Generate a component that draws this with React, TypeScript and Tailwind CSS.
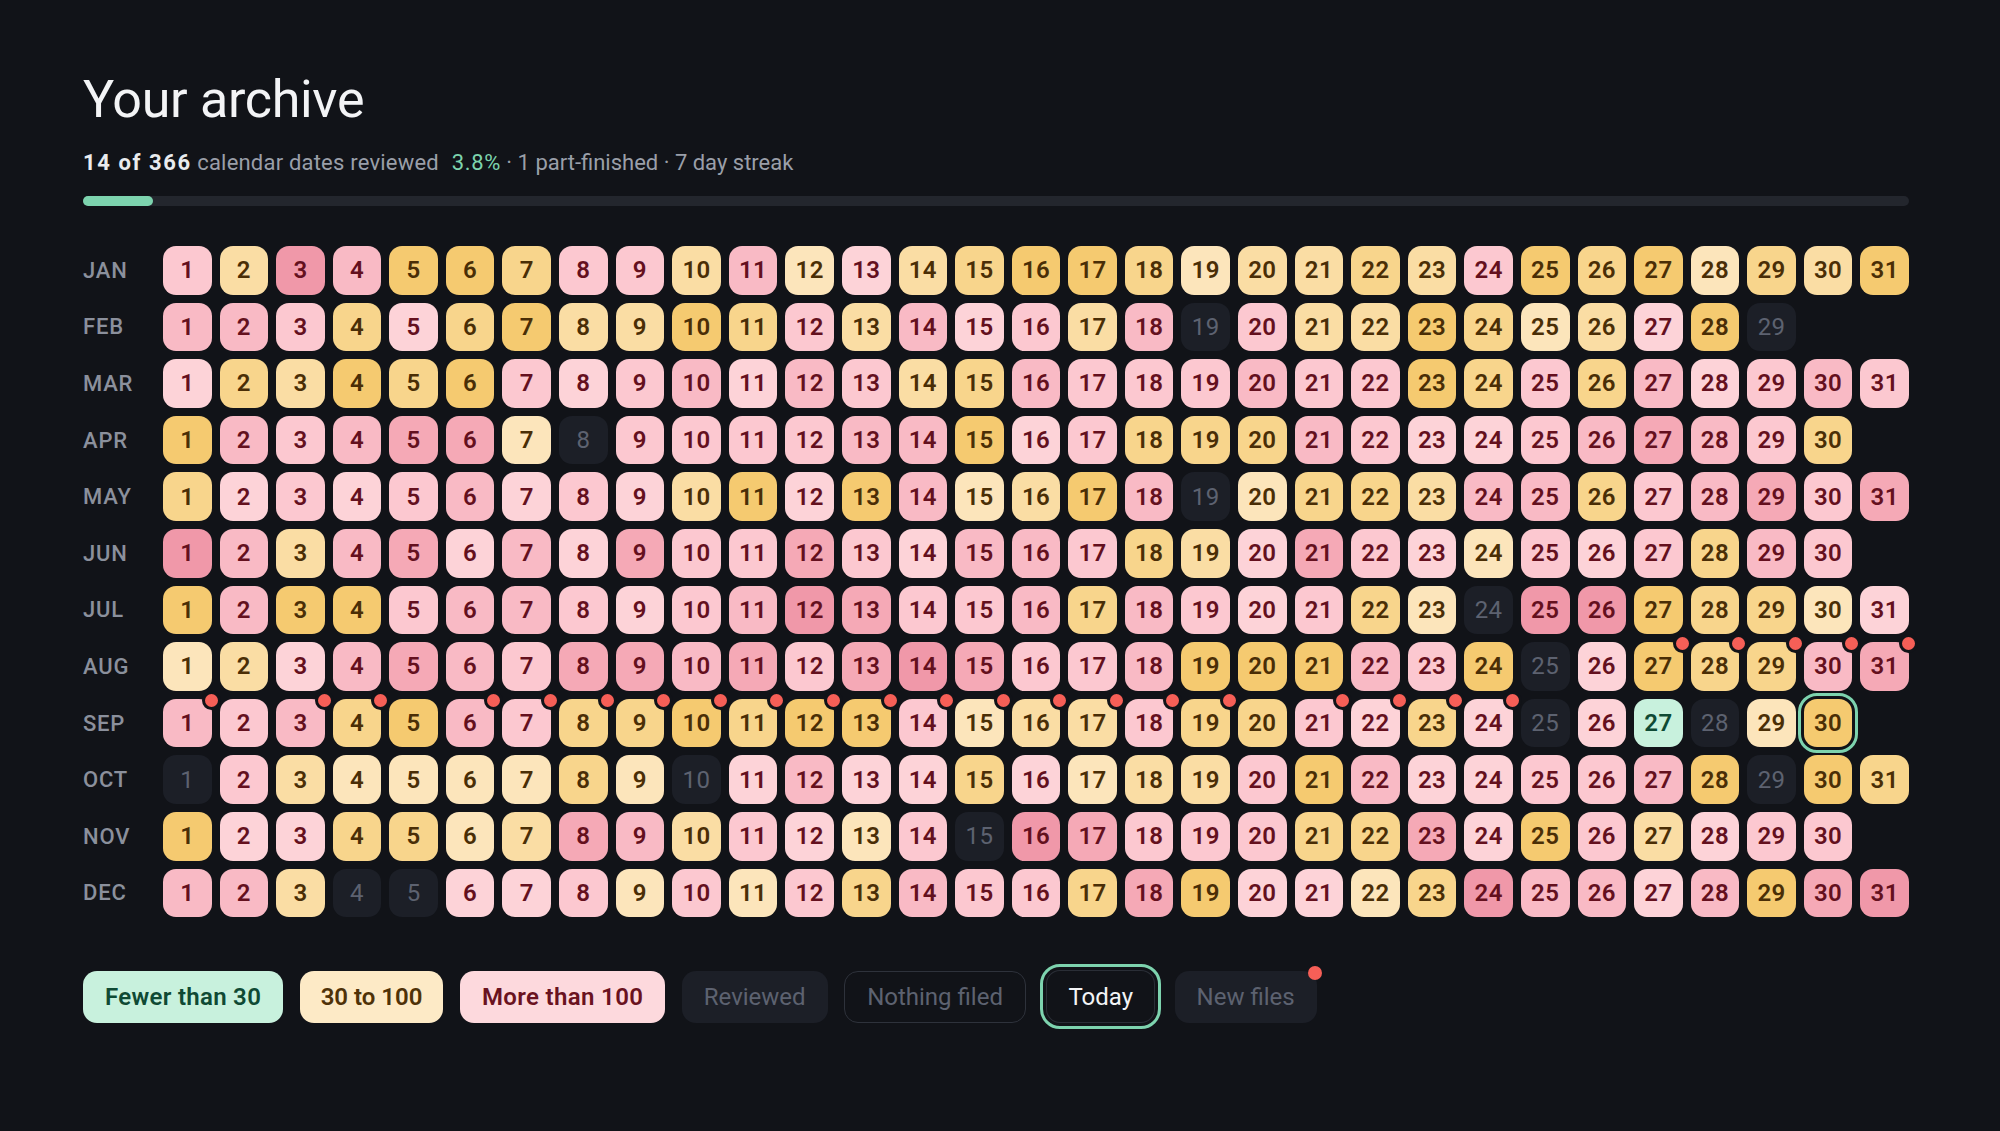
const MONTHS: [string, string][] = [
  ["JAN", "2B53DDC22B3A1BCDDCABBCB2DCDACBD"],
  ["FEB", "332C1CDBBDC2B312B3x2BBDCAB1Dx"],
  ["MAR", "1CBDCD2123132BC3222322DC2C31232"],
  ["APR", "D32344Ax222233D12CCC321123432C"],
  ["MAY", "C12123121BD1D3ABD3xACCB33C23424"],
  ["JUN", "53B34131422421332CB1421A212C32"],
  ["JUL", "D3DD233212354223C3212CAx55DCCA1"],
  ["AUG", "AB1343244342454223DDD32Dx1DCC34"],
  ["SEP", "323CD32CCDCDD2ABB2CC21C1x1gxAT"],
  ["OCT", "x2BAAAACAx1311C1ABB2D311223DxDC"],
  ["NOV", "D11CCAB43B21A2x54222CC41D2B122"],
  ["DEC", "33Bxx112A2A2C322C4D11AC53313D45"],
];

const LOOK: Record<string, string> = {
  "1": "bg-[#fdd3d8] text-[#64101e]",
  "2": "bg-[#fcc8d0] text-[#64101e]",
  "3": "bg-[#f9bac5] text-[#64101e]",
  "4": "bg-[#f5a9b6] text-[#64101e]",
  "5": "bg-[#f098a9] text-[#64101e]",
  A: "bg-[#fce5bb] text-[#4a2e06]",
  B: "bg-[#fadda4] text-[#4a2e06]",
  C: "bg-[#f8d58c] text-[#4a2e06]",
  D: "bg-[#f5ca70] text-[#4a2e06]",
  T: "bg-[#f5ca70] text-[#4a2e06] outline-3 outline-offset-3 outline-[#7dd3ae]",
  g: "bg-[#c8f1dd] text-[#0f4a34]",
  x: "bg-[#1c1f27] text-[#5d6270] !font-normal",
};

// days that carry the red "new files" dot
const DOTS: Record<string, number[]> = {
  AUG: [27, 28, 29, 30, 31],
  SEP: [1, 3, 4, 6, 7, 8, 9, 10, 11, 12, 13, 14, 15, 16, 17, 18, 19, 21, 22, 23, 24],
};

function Day({ day, code, dot }: { day: number; code: string; dot: boolean }) {
  return (
    <div
      className={`relative aspect-square rounded-[13px] flex items-center justify-center text-[24px] tracking-[0.4px] font-semibold ${LOOK[code]}`}
    >
      {day}
      {dot && (
        <span className="absolute -top-[8px] -right-[9px] w-[19px] h-[19px] rounded-full bg-[#f65f57] border-[3px] border-[#111318]" />
      )}
    </div>
  );
}

export default function App() {
  return (
    <div className="min-h-[1131px] w-[2000px] bg-[#111318] pl-[83px] pr-[91px] pt-[67px] font-['Roboto',sans-serif]">
      {/* Header */}
      <h1 className="text-[52px] leading-[66px] font-normal tracking-[-0.3px] text-[#f3f4f6]">Your archive</h1>
      <p className="mt-[15px] text-[22px] leading-[30px] text-[#9a9fa9]">
        <span className="font-bold tracking-[1.6px] text-[#e9ebee]">14 of 366</span>{" "}
        <span className="tracking-[0.2px]">calendar dates reviewed</span>
        <span className="ml-[13px] tracking-[0.6px] text-[#7dd3ae]">3.8%</span> · 1 part-finished · 7 day streak
      </p>
      <div className="mt-[18px] h-[10px] rounded-full bg-[#23262d]">
        <div className="h-full w-[70px] rounded-full bg-[#7dd3ae]" />
      </div>

      {/* Calendar */}
      <div className="mt-[40px] flex flex-col gap-2">
        {MONTHS.map(([name, codes]) => (
          <div
            key={name}
            className="grid grid-cols-[72px_repeat(31,minmax(0,1fr))] gap-x-2 items-center"
          >
            <span className="text-[22px] font-medium tracking-[0.8px] text-[#8b909c]">{name}</span>
            {codes.split("").map((code, i) => (
              <Day
                key={i}
                day={i + 1}
                code={code}
                dot={(DOTS[name] || []).includes(i + 1)}
              />
            ))}
          </div>
        ))}
      </div>

      {/* Legend */}
      <div className="mt-[47px] flex items-center gap-[16.5px] text-[24px]">
        <div className="h-[52px] px-[22px] tracking-[0.3px] rounded-[14px] flex items-center font-semibold bg-[#c8f1dd] text-[#0f4a34]">
          Fewer than 30
        </div>
        <div className="h-[52px] px-[21px] rounded-[14px] flex items-center font-semibold bg-[#fdeac6] text-[#4f3208]">
          30 to 100
        </div>
        <div className="h-[52px] px-[22px] tracking-[0.35px] rounded-[14px] flex items-center font-semibold bg-[#fdd9dd] text-[#6a1220]">
          More than 100
        </div>
        <div className="h-[52px] px-[22px] rounded-[14px] flex items-center bg-[#1c1f27] text-[#5d6270]">
          Reviewed
        </div>
        <div className="h-[52px] px-[22px] rounded-[14px] flex items-center border border-[#2e323b] text-[#5d6270]">
          Nothing filed
        </div>
        <div className="h-[65px] -ml-[2px] -mr-[3px] px-[25px] rounded-[20px] flex items-center border-[3px] border-[#7dd3ae] text-[#f3f4f6] shadow-[inset_0_0_0_3px_#111318,inset_0_0_0_4px_#2a2e36]">
          Today
        </div>
        <div className="relative h-[52px] px-[22px] rounded-[14px] flex items-center bg-[#1c1f27] text-[#5d6270]">
          New files
          <span className="absolute -top-[5px] -right-[5px] w-[14px] h-[14px] rounded-full bg-[#f65f57]" />
        </div>
      </div>
    </div>
  );
}
